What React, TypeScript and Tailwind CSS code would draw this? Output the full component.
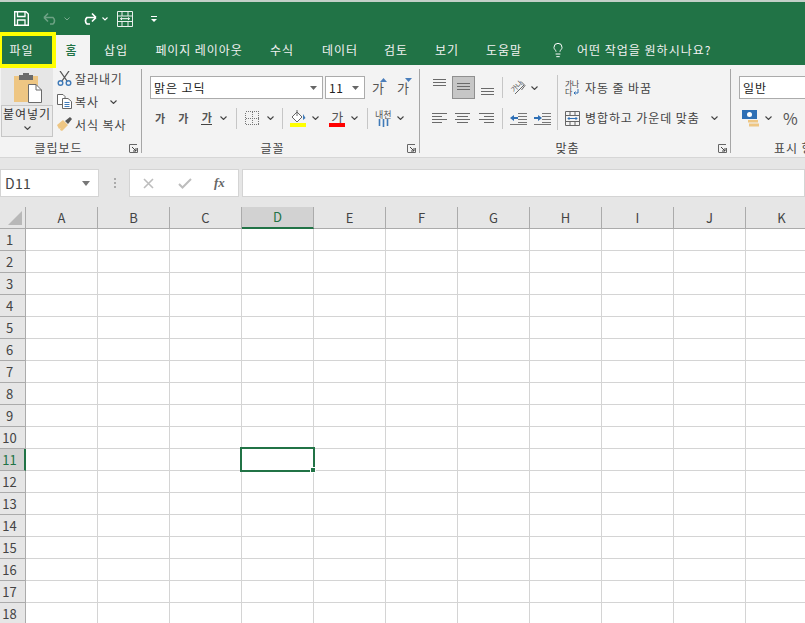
import { Lightbulb } from "lucide-react";

const FONT = "font-['Noto_Sans_CJK_KR','Noto_Sans',sans-serif]";
const COLUMNS = ["A", "B", "C", "D", "E", "F", "G", "H", "I", "J", "K"];
const ROWS = Array.from({ length: 18 }, (_, i) => i + 1);
const TABS = [
  { label: "삽입", w: "w-[54px]" },
  { label: "페이지 레이아웃", w: "w-[112px]" },
  { label: "수식", w: "w-[54px]" },
  { label: "데이터", w: "w-[62px]" },
  { label: "검토", w: "w-[50px]" },
  { label: "보기", w: "w-[52px]" },
  { label: "도움말", w: "w-[62px]" },
];

function Chev({ className = "" }: { className?: string }) {
  return (
    <svg width="7" height="4" viewBox="0 0 7 4" className={`shrink-0 ${className}`}>
      <path d="M.5.5l3 3 3-3" fill="none" stroke="#444" strokeWidth="1.1" />
    </svg>
  );
}

function Launcher() {
  return (
    <svg width="9" height="9" viewBox="0 0 9 9" className="absolute right-[3px] bottom-0">
      <path d="M.5 8V.5H8M.5 8.5H8.5V4" fill="none" stroke="#666" />
      <path d="M3 3l4 4M4 7h3V4" fill="none" stroke="#444" />
    </svg>
  );
}

function Sep({ h = "h-[20px]" }: { h?: string }) {
  return <div className={`w-px shrink-0 ${h} bg-[#c6c6c6]`} />;
}

// horizontal alignment icon, each line given as [from, to]
function Lines({ rows }: { rows: [number, number][] }) {
  return (
    <svg width="15" height="15" viewBox="0 0 15 15" className="shrink-0">
      {rows.map(([a, b], i) => (
        <path key={i} d={`M${a} ${2 + i * 3}.5H${b}`} stroke="#6a6a6a" />
      ))}
    </svg>
  );
}

function VAlign({ top, h = 23 }: { top: number; h?: number }) {
  return (
    <svg width="15" height={h} viewBox={`0 0 15 ${h}`} className="shrink-0">
      {[0, 3, 6].map((d) => (
        <path key={d} d={`M1 ${top + d}.5H14`} stroke="#6a6a6a" />
      ))}
    </svg>
  );
}

function Ga({ className = "", underline = false, arrow }: { className?: string; underline?: boolean; arrow?: "up" | "down" }) {
  return (
    <span className={`relative inline-flex flex-col items-center font-bold text-[#555] text-[11px] leading-[13px] ${className}`}>
      가
      {underline && <span className="w-[11px] h-px bg-[#444]" />}
      {arrow && (
        <svg width="7" height="4" viewBox="0 0 7 4" className="absolute -top-[3px] -right-[3px]">
          <path d={arrow === "up" ? "M0 4L3.5 0 7 4z" : "M0 0H7L3.5 4z"} fill="#4a7ebb" />
        </svg>
      )}
    </span>
  );
}

function QuickAccess() {
  return (
    <div className="h-[33px] bg-[#217346] flex items-center">
      <svg width="15" height="15" viewBox="0 0 15 15" className="ml-[14px]">
        <path d="M.7.7H12L14.3 3V14.3H.7z" fill="none" stroke="#fff" strokeWidth="1.4" />
        <path d="M3.5 1V5.5H11V1M3.5 14V9H11V14" fill="none" stroke="#fff" strokeWidth="1.3" />
      </svg>
      <svg width="16" height="13" viewBox="0 0 16 13" className="ml-[14px] opacity-40">
        <path d="M1 5.5H10A4.2 4.2 0 0 1 10 12H7M1 5.5L5 1.5M1 5.5L5 9.5" fill="none" stroke="#dfe8e2" strokeWidth="1.6" />
      </svg>
      <svg width="6" height="4" viewBox="0 0 6 4" className="ml-[5px] opacity-40">
        <path d="M.5.5L3 3 5.5.5" fill="none" stroke="#fff" />
      </svg>
      <svg width="16" height="13" viewBox="0 0 16 13" className="ml-[11px]">
        <path d="M15 5.5H6A4.2 4.2 0 0 0 6 12H9M15 5.5L11 1.5M15 5.5L11 9.5" fill="none" stroke="#fff" strokeWidth="1.7" />
      </svg>
      <svg width="6" height="4" viewBox="0 0 6 4" className="ml-[5px]">
        <path d="M.5.5L3 3 5.5.5" fill="none" stroke="#fff" strokeWidth="1.1" />
      </svg>
      <svg width="16" height="16" viewBox="0 0 16 16" className="ml-[9px]">
        <path d="M.5.5H15.5V15.5H.5zM.5 5H15.5M.5 10.5H15.5M5 .5V5M11 .5V5M5 10.5V15.5M11 10.5V15.5" fill="none" stroke="#e9f0ec" />
        <path d="M3.5 7.7H12.5M5 6.5L3.5 7.7 5 9M11 6.5L12.5 7.7 11 9" fill="none" stroke="#fff" />
      </svg>
      <svg width="6" height="6" viewBox="0 0 6 6" className="ml-[18px]">
        <path d="M0 .5H6" stroke="#fff" />
        <path d="M0 3L3 6 6 3z" fill="#fff" />
      </svg>
    </div>
  );
}

function TabBar() {
  return (
    <div className="h-[30px] bg-[#217346] flex items-stretch text-[12px] text-[#f1f1f1] relative">
      {/* highlighted file tab */}
      <div className="w-[56px] h-[36px] -mt-[3px] border-[4px] border-l-2 border-[#ffff00] flex items-center justify-center pr-[11px] tracking-[0.9px] z-10 relative">
        파일
      </div>
      <div className="w-[34px] bg-[#f3f3f3] text-[#217346] flex items-center justify-center pr-[4px] font-medium">홈</div>
      <div className="flex items-center ml-[-1px]">
        {TABS.map((t) => (
          <div key={t.label} className={`${t.w} flex justify-center tracking-[0.9px]`}>
            {t.label}
          </div>
        ))}
        <Lightbulb size={16} strokeWidth={1.5} className="ml-[15px] text-white" />
        <span className="ml-[11px] tracking-[1px]">어떤 작업을 원하시나요?</span>
      </div>
    </div>
  );
}

function ClipboardGroup() {
  return (
    <div className="w-[142px] shrink-0 relative border-r border-[#a6a6a6] my-[4px] flex">
      <div className="w-[52px] ml-px -mt-[1px] flex flex-col">
        <div className="h-[37px] bg-[#e6e6e6] flex items-start justify-center">
          <svg width="28" height="30" viewBox="0 0 28 30" className="mt-[5px] ml-[2px]">
            <path d="M0 3H24V29H0z" fill="#eec683" />
            <path d="M5 2H19V7H5z" fill="#6b6b6b" />
            <path d="M9 0H15V3H9z" fill="#6b6b6b" />
            <path d="M14.5 11.5H22L27.5 17V29.5H14.5z" fill="#fff" stroke="#6b6b6b" />
            <path d="M22 11.5V17H27.5" fill="none" stroke="#6b6b6b" />
          </svg>
        </div>
        <div className="h-[32px] bg-[#ebebeb] border border-[#c6c6c6] flex flex-col items-center text-[12px] leading-[16px] text-[#333] tracking-[0.9px]">
          붙여넣기
          <Chev className="mt-[4px]" />
        </div>
      </div>
      <div className="flex flex-col text-[12px] leading-[23px] text-[#444] ml-[4px] tracking-[0.9px]">
        <div className="flex items-center h-[23px] mt-[-2px]">
          <svg width="15" height="15" viewBox="0 0 15 15">
            <path d="M3 0L10 10M12 0L5 10" stroke="#555" strokeWidth="1.3" />
            <circle cx="3.5" cy="12" r="2.3" fill="none" stroke="#3f7ab8" strokeWidth="1.4" />
            <circle cx="11.5" cy="12" r="2.3" fill="none" stroke="#3f7ab8" strokeWidth="1.4" />
          </svg>
          <span className="ml-[3px]">잘라내기</span>
        </div>
        <div className="flex items-center h-[23px]">
          <svg width="15" height="15" viewBox="0 0 15 15">
            <path d="M.5.5H6L8 2.5V10.5H.5z" fill="#fff" stroke="#666" />
            <path d="M5.5 4.5H11L14.5 7.5V14.5H5.5z" fill="#fff" stroke="#666" />
            <path d="M7.5 8.5H12.5M7.5 10.5H12.5M7.5 12.5H12.5" stroke="#3f7ab8" />
          </svg>
          <span className="ml-[3px]">복사</span>
          <Chev className="ml-[11px]" />
        </div>
        <div className="flex items-center h-[23px]">
          <svg width="15" height="15" viewBox="0 0 15 15">
            <path d="M0 8L6 3 11 8 5 14 3 13 3.5 11 2 12z" fill="#eec683" />
            <path d="M8 4L13 0 15 2 11 7z" fill="#555" />
          </svg>
          <span className="ml-[3px]">서식 복사</span>
        </div>
      </div>
      <div className="absolute inset-x-0 bottom-[-3px] text-center text-[12px] leading-[16px] text-[#444] tracking-[0.9px] pr-[24px]">클립보드</div>
      <Launcher />
    </div>
  );
}

function FontGroup() {
  return (
    <div className="w-[278px] shrink-0 relative border-r border-[#a6a6a6] my-[4px] flex flex-col">
      <div className="flex items-center mt-[7px] h-[23px]">
        <div className="ml-[8px] w-[173px] h-[23px] bg-white border border-[#ababab] flex items-center justify-between pl-[3px] pr-[5px] text-[12px] text-[#222] tracking-[0.9px]">
          맑은 고딕
          <svg width="7" height="4" viewBox="0 0 7 4"><path d="M0 0H7L3.5 4z" fill="#666" /></svg>
        </div>
        <div className="ml-[2px] w-[40px] h-[23px] bg-white border border-[#ababab] flex items-center justify-between pl-[3px] pr-[5px] text-[12px] text-[#222] tracking-[0.5px]">
          11
          <svg width="7" height="4" viewBox="0 0 7 4"><path d="M0 0H7L3.5 4z" fill="#666" /></svg>
        </div>
        <Ga arrow="up" className="ml-[7px] !text-[13px] !font-normal" />
        <Ga arrow="down" className="ml-[13px] !text-[13px] !font-normal" />
      </div>
      <div className="flex items-center mt-[7px] h-[24px]">
        <Ga className="ml-[13px]" />
        <Ga className="ml-[13px]" />
        <Ga underline className="ml-[13px]" />
        <Chev className="ml-[8px]" />
        <Sep h="h-[21px] ml-[9px]" />
        <svg width="14" height="14" viewBox="0 0 14 14" className="ml-[8px] shrink-0" shapeRendering="crispEdges">
          <path d="M.5.5H13.5V13.5H.5zM.5 7.5H13.5M7.5 .5V13.5" fill="none" stroke="#777" strokeDasharray="1 1" />
        </svg>
        <Chev className="ml-[8px]" />
        <Sep h="h-[21px] ml-[8px]" />
        <div className="ml-[7px] w-[16px] flex flex-col shrink-0">
          <svg width="16" height="13" viewBox="0 0 16 13">
            <path d="M2 7L7 2 12 7 7 12z" fill="#fff" stroke="#666" />
            <path d="M7 0V6" stroke="#666" />
            <path d="M13 4L15.5 8 13 10z" fill="#3f7ab8" />
          </svg>
          <div className="h-[4px] bg-[#ffff00]" />
        </div>
        <Chev className="ml-[6px]" />
        <div className="ml-[10px] w-[16px] flex flex-col items-center shrink-0">
          <span className="text-[13px] leading-[13px] text-[#555]">가</span>
          <div className="w-[16px] h-[4px] bg-[#ff0000]" />
        </div>
        <Chev className="ml-[6px]" />
        <Sep h="h-[21px] ml-[9px]" />
        <div className="ml-[7px] w-[16px] flex flex-col items-center leading-[9px] text-[9px] text-[#555] shrink-0 whitespace-nowrap">
          내천
          <svg width="11" height="8" viewBox="0 0 11 8"><path d="M1.5 0V7M5.5 0V8M9.5 0V7" stroke="#3f7ab8" strokeWidth="1.6" /></svg>
        </div>
        <Chev className="ml-[6px]" />
      </div>
      <div className="absolute inset-x-0 bottom-[-3px] text-center text-[12px] leading-[16px] text-[#444] tracking-[0.9px] pr-[16px]">글꼴</div>
      <Launcher />
    </div>
  );
}

function AlignGroup() {
  return (
    <div className="w-[311px] shrink-0 relative border-r border-[#a6a6a6] my-[4px] flex">
      <div className="flex flex-col ml-[12px] mt-[7px] w-[119px] shrink-0">
        <div className="flex items-center h-[23px]">
          <VAlign top={3} />
          <div className="ml-[5px] w-[23px] h-[23px] bg-[#c6c6c6] border border-[#8f8f8f] flex items-center justify-center shrink-0">
            <VAlign top={6} h={21} />
          </div>
          <div className="ml-[5px]"><VAlign top={12} /></div>
          <Sep h="h-[21px] ml-[7px]" />
          {/* text orientation: slanted letters with an arrow beside them */}
          <div className="ml-[6px] w-[17px] h-[17px] relative shrink-0">
            <span className="absolute left-[1px] top-[3px] -rotate-45 text-[7px] leading-[8px] text-[#555] tracking-normal whitespace-nowrap">가나</span>
            <svg width="17" height="17" viewBox="0 0 17 17" className="absolute inset-0">
              <path d="M6 15L15 6M12 2.5L16 6.5 12.5 11" fill="none" stroke="#666" />
            </svg>
          </div>
          <Chev className="ml-[5px]" />
        </div>
        <div className="flex items-center h-[24px] mt-[7px]">
          <Lines rows={[[0, 15], [0, 10], [0, 15], [0, 10]]} />
          <div className="ml-[8px]"><Lines rows={[[0, 15], [2, 13], [0, 15], [2, 13]]} /></div>
          <div className="ml-[9px]"><Lines rows={[[0, 15], [5, 15], [0, 15], [5, 15]]} /></div>
          <Sep h="h-[21px] ml-[8px]" />
          <svg width="17" height="13" viewBox="0 0 17 13" className="ml-[7px] shrink-0">
            <path d="M8 1.5H17M8 4.5H17M8 7.5H17M8 10.5H17M0 12.5H17" stroke="#777" />
            <path d="M0 6L4 3V5H8V7H4V9z" fill="#2e6fb5" />
          </svg>
          <svg width="17" height="13" viewBox="0 0 17 13" className="ml-[7px] shrink-0">
            <path d="M8 1.5H17M8 4.5H17M8 7.5H17M8 10.5H17M0 12.5H17" stroke="#777" />
            <path d="M8 6L4 3V5H0V7H4V9z" fill="#2e6fb5" />
          </svg>
        </div>
      </div>
      <div className="ml-[6px] mt-[6px] w-px h-[55px] bg-[#c6c6c6] shrink-0" />
      <div className="flex flex-col ml-[7px] mt-[7px] text-[12px] text-[#444] tracking-[0.9px]">
        <div className="flex items-center h-[23px]">
          <div className="w-[15px] shrink-0 flex flex-col text-[8px] leading-[8px] text-[#444] tracking-[-0.5px] whitespace-nowrap">
            <span>가나</span>
            <span className="flex items-center">
              다
              <svg width="6" height="6" viewBox="0 0 6 6" className="ml-[1px]"><path d="M5 0V4H1M2.5 2.5L1 4 2.5 5.5" fill="none" stroke="#2e6fb5" /></svg>
            </span>
          </div>
          <span className="ml-[5px]">자동 줄 바꿈</span>
        </div>
        <div className="flex items-center h-[24px] mt-[7px]">
          <svg width="15" height="15" viewBox="0 0 15 15" className="shrink-0">
            <path d="M.5.5H14.5V14.5H.5zM.5 4.5H14.5M.5 10.5H14.5M5 .5V4.5M10 .5V4.5M5 10.5V14.5M10 10.5V14.5" fill="none" stroke="#666" />
            <path d="M3 7.5H12M4.5 6L3 7.5 4.5 9M10.5 6L12 7.5 10.5 9" fill="none" stroke="#2e6fb5" />
          </svg>
          <span className="ml-[5px]">병합하고 가운데 맞춤</span>
          <Chev className="ml-[11px]" />
        </div>
      </div>
      <div className="absolute inset-x-0 bottom-[-3px] text-center text-[12px] leading-[16px] text-[#444] tracking-[0.9px] pr-[15px]">맞춤</div>
      <Launcher />
    </div>
  );
}

function NumberGroup() {
  return (
    <div className="w-[74px] shrink-0 relative my-[4px] flex flex-col">
      <div className="ml-[8px] mt-[7px] w-[90px] h-[23px] bg-white border border-[#ababab] flex items-center pl-[3px] text-[12px] text-[#222] tracking-[0.9px] shrink-0">일반</div>
      <div className="flex items-center h-[24px] mt-[7px] ml-[11px]">
        <svg width="17" height="17" viewBox="0 0 17 17" className="shrink-0">
          <path d="M0 0H15V9H0z" fill="#2e6fb5" />
          <circle cx="7.5" cy="4.5" r="2.5" fill="#fff" />
          <path d="M6 10H16V12.5H6zM7 13.5H17V16.5H7z" fill="#eec683" />
        </svg>
        <Chev className="ml-[6px]" />
        <span className="ml-[11px] text-[16px] leading-[24px] text-[#555]">%</span>
      </div>
      <div className="absolute left-[43px] bottom-[-3px] whitespace-nowrap text-[12px] leading-[16px] text-[#444] tracking-[0.9px]">표시 형식</div>
    </div>
  );
}

function FormulaBar() {
  return (
    <div className="h-[49px] bg-[#e6e6e6] flex items-start pt-[11px] shrink-0">
      <div className="w-[99px] h-[28px] bg-white border border-[#d4d4d4] flex items-center justify-between pl-[4px] pr-[8px] text-[14px] text-[#444] tracking-[0.3px]">
        D11
        <svg width="8" height="5" viewBox="0 0 8 5"><path d="M0 0H8L4 5z" fill="#777" /></svg>
      </div>
      <div className="w-[30px] h-[28px] flex flex-col items-center justify-center gap-[2px] pl-[1px]">
        <span className="w-[2px] h-[2px] bg-[#aaa]" />
        <span className="w-[2px] h-[2px] bg-[#aaa]" />
        <span className="w-[2px] h-[2px] bg-[#aaa]" />
      </div>
      <div className="w-[110px] h-[28px] bg-white border border-[#d4d4d4] flex items-center">
        <svg width="11" height="11" viewBox="0 0 11 11" className="ml-[13px]">
          <path d="M1 1L10 10M10 1L1 10" stroke="#bdbdbd" strokeWidth="1.6" />
        </svg>
        <svg width="14" height="11" viewBox="0 0 14 11" className="ml-[24px]">
          <path d="M1 6L4.5 9.5 13 1" fill="none" stroke="#bdbdbd" strokeWidth="2" />
        </svg>
        <span className="ml-[22px] font-['Liberation_Serif',serif] italic font-bold text-[13px] text-[#666]">fx</span>
      </div>
      <div className="ml-[3px] flex-1 h-[28px] bg-white border border-[#d4d4d4]" />
    </div>
  );
}

function Sheet() {
  return (
    <div className="relative flex-1 overflow-hidden">
      <div className="grid grid-cols-[26px_repeat(11,72px)] auto-rows-[22px]">
        <div className="bg-[#e6e6e6] border-r border-b border-[#ababab] flex items-end justify-end pb-[3px] pr-[3px]">
          <svg width="14" height="14" viewBox="0 0 14 14"><path d="M14 0V14H0z" fill="#b8b8b8" /></svg>
        </div>
        {COLUMNS.map((c) =>
          c === "D" ? (
            <div key={c} className="bg-[#d2d2d2] border-r border-[#ababab] border-b-2 border-b-[#217346] flex items-center justify-center text-[13px] text-[#217346]">{c}</div>
          ) : (
            <div key={c} className="bg-[#e6e6e6] border-r border-b border-[#ababab] flex items-center justify-center text-[13px] text-[#444]">{c}</div>
          ),
        )}
        {ROWS.map((r) => (
          <div key={r} className="contents">
            {r === 11 ? (
              <div className="bg-[#d2d2d2] border-r-2 border-r-[#217346] border-b border-[#ababab] flex items-center justify-center pr-[5px] text-[13px] text-[#217346]">{r}</div>
            ) : (
              <div className="bg-[#e6e6e6] border-r border-b border-[#ababab] flex items-center justify-center pr-[6px] text-[13px] text-[#444]">{r}</div>
            )}
            {COLUMNS.map((c) => (
              <div key={c} className="bg-white border-r border-b border-[#d4d4d4]" />
            ))}
          </div>
        ))}
      </div>
      {/* active cell D11 */}
      <div className="absolute left-[240px] top-[240px] w-[75px] h-[25px] border-2 border-[#217346]">
        <div className="absolute -right-[3px] -bottom-[3px] w-[6px] h-[6px] bg-[#217346] border border-white" />
      </div>
    </div>
  );
}

export default function App() {
  return (
    <div className={`w-[805px] h-[623px] overflow-hidden flex flex-col bg-[#e6e6e6] ${FONT}`}>
      <div className="h-[2px] bg-[#c3cfc8] shrink-0" />
      <QuickAccess />
      <TabBar />
      <div className="h-[93px] bg-[#f3f3f3] border-b border-[#d6d6d6] flex shrink-0 relative">
        <ClipboardGroup />
        <FontGroup />
        <AlignGroup />
        <NumberGroup />
      </div>
      <FormulaBar />
      <Sheet />
    </div>
  );
}
